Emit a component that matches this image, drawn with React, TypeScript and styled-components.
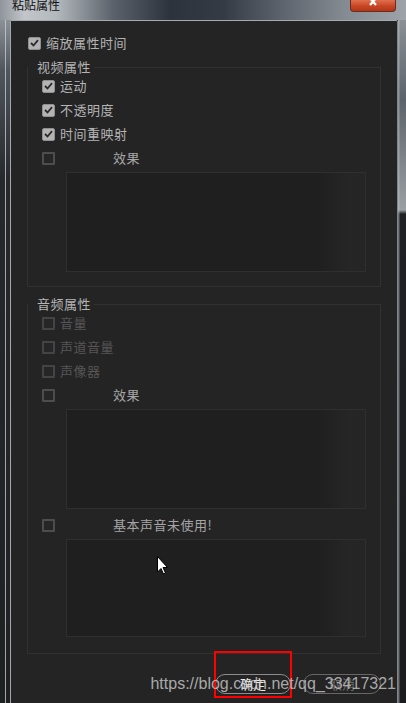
import styled, { createGlobalStyle } from 'styled-components';

const GlobalStyle = createGlobalStyle`
  html, body {
    margin: 0;
    padding: 0;
    background: #1a1a1a;
  }
  body {
    font-family: "Noto Sans CJK SC", "Noto Sans", sans-serif;
  }
`;

const Window = styled.div`
  position: relative;
  width: 406px;
  height: 703px;
  overflow: hidden;
  display: flex;
  flex-direction: column;
  background: #1d1e20;
`;

const TitleBar = styled.div`
  height: 20px;
  flex: none;
  display: flex;
  align-items: flex-start;
  background: linear-gradient(
    to right,
    #8f959b 0,
    #c2c6ca 6%,
    #b3b8bd 14%,
    #5a616a 28%,
    #2c333c 42%,
    #343b44 55%,
    #5e656e 70%,
    #858b92 85%,
    #9ea3a9 100%
  );
`;

const Title = styled.span`
  margin: -3px 0 0 12px;
  font-size: 12px;
  line-height: 15px;
  color: #111;
`;

const CloseButton = styled.div`
  margin-left: auto;
  margin-right: 10px;
  width: 46px;
  height: 12px;
  box-sizing: border-box;
  border: 1px solid #6b2c1e;
  border-top: none;
  border-radius: 0 0 4px 4px;
  background: linear-gradient(#e0704f, #c94523 55%, #b13818);
  display: flex;
  justify-content: center;
  align-items: flex-start;
`;

const Body = styled.div`
  flex: 1;
  display: flex;
  min-height: 0;
`;

const LeftFrame = styled.div`
  width: 10px;
  flex: none;
  background:
    linear-gradient(to right, transparent 5px, rgba(205, 210, 215, 0.75) 5px, rgba(205, 210, 215, 0.75) 6px, transparent 6px),
    linear-gradient(to bottom, #8c9197 0, #50565d 50px, #26282c 160px, #1f2022 100%);
`;

const RightFrame = styled.div`
  flex: 1;
  background:
    linear-gradient(to right, rgba(190, 195, 200, 0.5) 0, rgba(190, 195, 200, 0.5) 1px, transparent 2px),
    linear-gradient(to bottom, #8a9096 0, #5d636a 80px, #9a9fa4 190px, #202124 194px, #1b1c1e 100%);
`;

const Client = styled.div`
  width: 388px;
  flex: none;
  box-sizing: border-box;
  border-top: 1px solid #a6abb0;
  border-left: 1px solid #a3a8ad;
  border-right: 1px solid #7f858b;
  border-top-right-radius: 2px;
  background: #242424;
  padding-top: 13px;
  display: flex;
  flex-direction: column;
`;

const Row = styled.div<{ $h?: number; $indent?: number; $top?: number }>`
  display: flex;
  align-items: center;
  gap: 5px;
  height: ${(p) => p.$h ?? 24}px;
  margin-left: ${(p) => p.$indent ?? 0}px;
  margin-top: ${(p) => p.$top ?? 0}px;
`;

const Label = styled.span<{ $disabled?: boolean }>`
  font-size: 13px;
  letter-spacing: 0.5px;
  line-height: 16px;
  color: ${(p) => (p.$disabled ? '#565656' : '#b4b4b4')};
  white-space: nowrap;
`;

const EffectLabel = styled(Label)`
  margin-left: 53px;
  color: #a6a6a6;
`;

const Box = styled.span<{ $checked?: boolean; $disabled?: boolean }>`
  width: 13px;
  height: 13px;
  flex: none;
  box-sizing: border-box;
  display: flex;
  align-items: center;
  justify-content: center;
  border-radius: ${(p) => (p.$checked ? 2 : 1)}px;
  border: ${(p) =>
    p.$checked ? '1px solid #8f8f8f' : `2px solid ${p.$disabled ? '#444' : '#4d4d4d'}`};
  background: ${(p) => (p.$checked ? '#b3b3b3' : '#262626')};
`;

const Group = styled.fieldset<{ $top: number; $bottom: number }>`
  margin: ${(p) => p.$top}px 16px 0;
  padding: 0 14px ${(p) => p.$bottom}px;
  border: 1px solid #313131;
  min-width: 0;
`;

const Legend = styled.legend`
  margin-left: -14px;
  padding: 0 3px 0 9px;
  font-size: 13px;
  letter-spacing: 0.5px;
  line-height: 14px;
  color: #b4b4b4;
`;

const EffectBox = styled.div<{ $h: number; $top?: number }>`
  margin: ${(p) => p.$top ?? 2}px 0 0 24px;
  height: ${(p) => p.$h}px;
  box-sizing: border-box;
  border: 1px solid #2f2f2f;
  background: linear-gradient(to right, #1f1f1f 0, #1f1f1f 84%, #262626 95%, #252525 100%);
`;

const Buttons = styled.div`
  display: flex;
  justify-content: flex-end;
  gap: 12px;
  margin: 20px 16px 0 0;
`;

const ButtonWrap = styled.div`
  position: relative;
`;

const Button = styled.button<{ $w: number; $dim?: boolean }>`
  width: ${(p) => p.$w}px;
  height: 20px;
  padding: 0;
  box-sizing: border-box;
  display: flex;
  align-items: center;
  justify-content: center;
  border: 1px solid ${(p) => (p.$dim ? '#666' : '#8c8c8c')};
  border-radius: 10px;
  background: transparent;
  font-family: "Noto Sans CJK SC", "Noto Sans", sans-serif;
  font-size: 13px;
  line-height: 14px;
  color: ${(p) => (p.$dim ? '#6a6a6a' : '#ececec')};
`;

const Highlight = styled.div`
  position: absolute;
  left: -1px;
  right: -1px;
  top: -23px;
  bottom: -4px;
  border: 2px solid #ff0000;
  pointer-events: none;
`;

const Watermark = styled.div`
  position: absolute;
  right: 10px;
  top: 675px;
  font-family: "Liberation Sans", Arial, sans-serif;
  font-size: 16px;
  line-height: 18px;
  color: rgba(205, 205, 205, 0.8);
  white-space: nowrap;
  pointer-events: none;
`;

const Cursor = styled.svg`
  position: absolute;
  left: 157px;
  top: 556px;
`;

const Check = () => (
  <svg width="9" height="8" viewBox="0 0 9 8">
    <path d="M1 4 L3.5 6.5 L8 1.2" fill="none" stroke="#2b2b2b" strokeWidth="1.8" />
  </svg>
);

function CheckItem({ label, checked, disabled, indent, h }: {
  label: string;
  checked?: boolean;
  disabled?: boolean;
  indent?: number;
  h?: number;
}) {
  return (
    <Row $indent={indent} $h={h}>
      <Box $checked={checked} $disabled={disabled}>{checked && <Check />}</Box>
      <Label $disabled={disabled}>{label}</Label>
    </Row>
  );
}

function EffectItem({ label, top }: { label: string; top?: number }) {
  return (
    <Row $top={top}>
      <Box />
      <EffectLabel>{label}</EffectLabel>
    </Row>
  );
}

export default function App() {
  return (
    <>
      <GlobalStyle />
      <Window>
        <TitleBar>
          <Title>粘贴属性</Title>
          <CloseButton>
            <svg width="14" height="6" viewBox="0 0 14 6">
              <path d="M2 -4 L10 5 M12 -4 L4 5" stroke="#fff" strokeWidth="2.2" />
            </svg>
          </CloseButton>
        </TitleBar>
        <Body>
          <LeftFrame />
          <Client>
            <CheckItem label="缩放属性时间" checked indent={17} h={18} />

            <Group $top={8} $bottom={14}>
              <Legend>视频属性</Legend>
              <CheckItem label="运动" checked />
              <CheckItem label="不透明度" checked />
              <CheckItem label="时间重映射" checked />
              <EffectItem label="效果" />
              <EffectBox $h={100} />
            </Group>

            <Group $top={10} $bottom={16}>
              <Legend>音频属性</Legend>
              <CheckItem label="音量" disabled />
              <CheckItem label="声道音量" disabled />
              <CheckItem label="声像器" disabled />
              <EffectItem label="效果" />
              <EffectBox $h={100} />
              <EffectItem label="基本声音未使用!" top={4} />
              <EffectBox $h={98} />
            </Group>

            <Buttons>
              <ButtonWrap>
                <Button $w={76}>确定</Button>
                <Highlight />
              </ButtonWrap>
              <Button $w={78} $dim>取消</Button>
            </Buttons>
          </Client>
          <RightFrame />
        </Body>
        <Watermark>https://blog.csdn.net/qq_33417321</Watermark>
        <Cursor width="12" height="19" viewBox="0 0 12 19">
          <path d="M0.5 0.5 L0.5 16 L4 12.5 L6.5 18 L8.5 17 L6 11.5 L10.5 11.5 Z" fill="#fff" stroke="#000" strokeWidth="1" />
        </Cursor>
      </Window>
    </>
  );
}
